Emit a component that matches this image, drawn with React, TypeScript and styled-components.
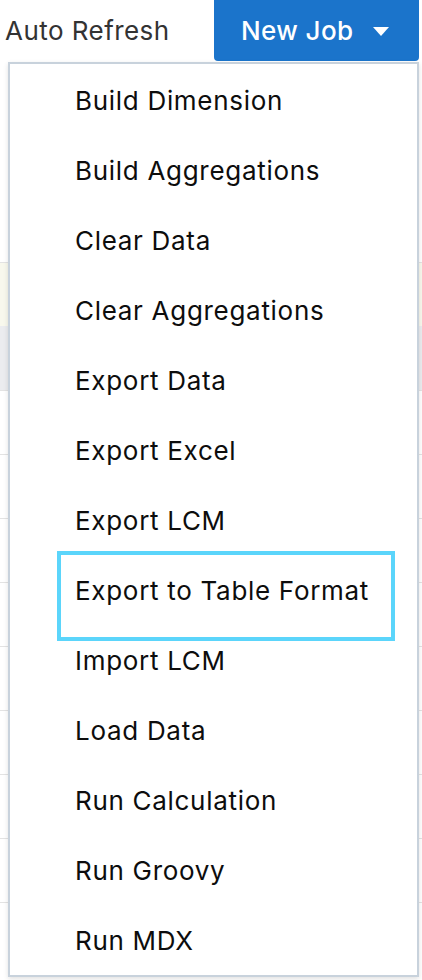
import React from "react";
import styled, { createGlobalStyle } from "styled-components";

const Global = createGlobalStyle`
  html, body { margin: 0; padding: 0; background: #ffffff; }
  body { font-family: Inter, "Noto Sans", "Liberation Sans", sans-serif; -webkit-font-smoothing: antialiased; }
  *, *::before, *::after { box-sizing: border-box; }
`;

const Page = styled.div`
  position: relative;
  width: 422px;
  height: 980px;
  overflow: hidden;
  background: #ffffff;
`;

const TopBar = styled.div`
  display: flex;
  align-items: flex-start;
  justify-content: space-between;
  height: 62px;
  padding: 0 3px 0 5px;
`;

const AutoRefresh = styled.span`
  margin-top: 15px;
  font-size: 26px;
  line-height: 32px;
  color: #333333;
  letter-spacing: 0.45px;
`;

const NewJobButton = styled.button`
  display: flex;
  align-items: center;
  gap: 19px;
  width: 205px;
  height: 61px;
  padding: 0 0 0 27px;
  margin: 0;
  border: none;
  border-radius: 0 0 4px 4px;
  background: #1b74cb;
  color: #ffffff;
  font-family: inherit;
  font-size: 26px;
  font-weight: 500;
  letter-spacing: 0.4px;
  cursor: pointer;
`;

const Caret = styled.span`
  width: 0;
  height: 0;
  margin-top: 2px;
  border-left: 8.5px solid transparent;
  border-right: 8.5px solid transparent;
  border-top: 9px solid #ffffff;
`;

const Table = styled.div`
  display: flex;
  flex-direction: column;
  padding-top: 200px;
`;

const Row = styled.div<{ $bg?: string; $line?: boolean }>`
  height: 64px;
  background: ${(p) => p.$bg || "transparent"};
  border-top: ${(p) => (p.$line ? "1px solid #e3e3e3" : "1px solid transparent")};
`;

const Menu = styled.ul`
  position: absolute;
  top: 62px;
  left: 8px;
  width: 411px;
  margin: 0;
  padding: 1px 0 0 0;
  list-style: none;
  background: #ffffff;
  border: 2px solid #c8d2dc;
  box-shadow: 0 2px 5px rgba(0, 0, 0, 0.12);
`;

const Item = styled.li<{ $focused?: boolean }>`
  position: relative;
  display: flex;
  align-items: center;
  height: 70px;
  padding-left: 65px;
  font-size: 26px;
  color: #0d0d0d;
  letter-spacing: 0.7px;

  &::after {
    content: "";
    display: ${(p) => (p.$focused ? "block" : "none")};
    position: absolute;
    top: -4px;
    left: 47px;
    width: 338px;
    height: 90px;
    border: 4px solid #5bd5fb;
  }
`;

const items = [
  "Build Dimension",
  "Build Aggregations",
  "Clear Data",
  "Clear Aggregations",
  "Export Data",
  "Export Excel",
  "Export LCM",
  "Export to Table Format",
  "Import LCM",
  "Load Data",
  "Run Calculation",
  "Run Groovy",
  "Run MDX",
];

export default function App() {
  return (
    <Page>
      <Global />
      <TopBar>
        <AutoRefresh>Auto Refresh</AutoRefresh>
        <NewJobButton>
          New Job
          <Caret />
        </NewJobButton>
      </TopBar>
      <Table>
        <Row $line $bg="#f8f8ed" />
        <Row $bg="#ebecef" />
        <Row $line />
        <Row $line />
        <Row $line />
        <Row $line />
        <Row $line />
        <Row $line />
        <Row $line />
        <Row $line />
        <Row $line />
      </Table>
      <Menu>
        {items.map((t) => (
          <Item key={t} $focused={t === "Export to Table Format"}>
            {t}
          </Item>
        ))}
      </Menu>
    </Page>
  );
}
